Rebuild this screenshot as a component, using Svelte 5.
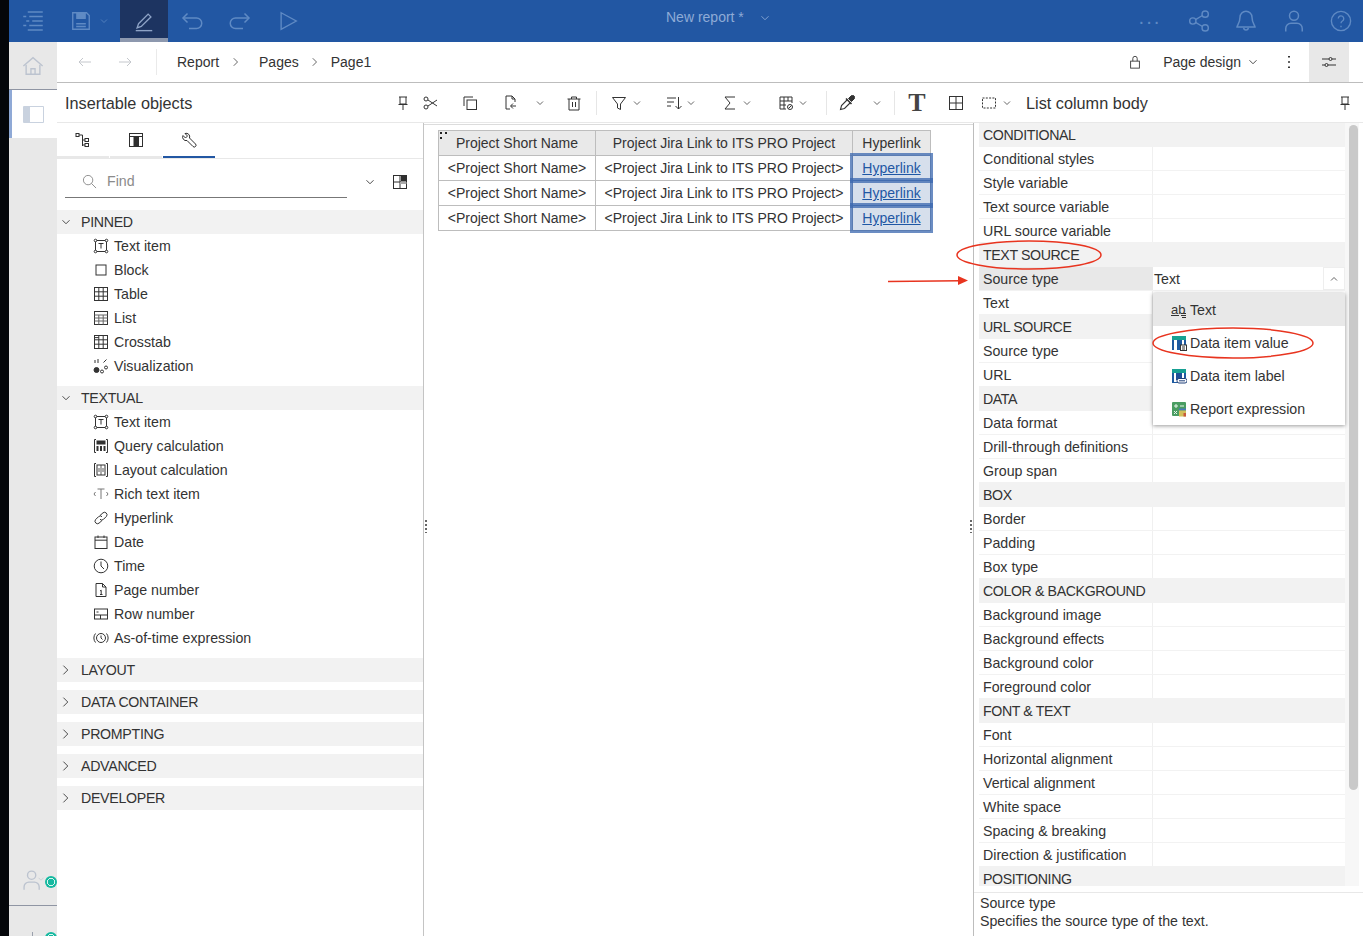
<script>
  const icons = {
    outline: '<path d="M4.500 2h10M1.500 5h2M5.500 5h9M3.500 8h2M7.500 8h7M1.500 11h2M5.500 11h9M4.500 14h10"/>',
    save: '<path d="M2 2h10l2 2v10H2z"/><path d="M5 2v4h6V2" fill="currentColor"/><path d="M4.500 10h7M4.500 12h7"/>',
    pen: '<path d="M4 10l7-7 2 2-7 7-3 1z"/><path d="M2 15h12"/>',
    undo: '<path d="M2 6h9a3 3 0 0 1 0 7H6"/><path d="M5 3L2 6l3 3"/>',
    redo: '<path d="M14 6H5a3 3 0 0 0 0 7h5"/><path d="M11 3l3 3-3 3"/>',
    play: '<path d="M3 2l11 6-11 6z"/>',
    share: '<circle cx="3.500" cy="8" r="2.300"/><circle cx="12.500" cy="3" r="2.300"/><circle cx="12.500" cy="13" r="2.300"/><path d="M5.500 7l5-3M5.500 9l5 3"/>',
    bell: '<path d="M8 1.500a4 4 0 0 0-4 4c0 4-2 5.500-2 6.500h12c0-1-2-2.500-2-6.500a4 4 0 0 0-4-4z"/><path d="M6.500 12.500a1.500 1.500 0 0 0 3 0"/>',
    user: '<circle cx="8" cy="4.500" r="3"/><path d="M2.500 15v-2a3.500 3.500 0 0 1 3.500-3.500h4a3.500 3.500 0 0 1 3.500 3.500v2"/>',
    help: '<circle cx="8" cy="8" r="7"/><path d="M6 6.200a2 2 0 1 1 3 1.800c-.7.400-1 .8-1 1.700M8 11.500v1"/>',
    home: '<path d="M1 8l7-6 7 6"/><path d="M3 7v7h10V7"/><path d="M6.500 14v-4h3v4"/>',
    back: '<path d="M14 8H2M6 4L2 8l4 4"/>',
    forward: '<path d="M2 8h12M10 4l4 4-4 4"/>',
    crumb: '<path d="M5 3l5 5-5 5"/>',
    lock: '<rect x="3" y="7" width="10" height="8"/><path d="M5.500 7V4a2.500 2.500 0 0 1 5 0v3"/>',
    kebab: '<path d="M8 2v1.500M8 7.200v1.500M8 12.500V14" stroke-width="2"/>',
    tune: '<path d="M1 5h7M11 5h4M1 11h3M7 11h8"/><circle cx="9.500" cy="5" r="1.500"/><circle cx="5.500" cy="11" r="1.500"/>',
    pin: '<path d="M5 2h6v7H5zM3.500 9.500h9M8 9.500V15" /><path d="M5 2H4m7 0h1"/>',
    scissors: '<circle cx="3" cy="4" r="2"/><circle cx="3" cy="12" r="2"/><path d="M5 5l9 6M5 11l9-6"/>',
    copy: '<path d="M2 11V2h9"/><rect x="5" y="5" width="9.500" height="9.500"/>',
    paste: '<path d="M9 1H3v13h4M9 1l3 3v3M9 1v3h3"/><path d="M13 11H8M10 8.500L7.500 11l2.500 2.500"/>',
    trash: '<path d="M1.500 4h13M5.500 4V2h5v2M3 4v11h10V4M6.500 7v5M9.500 7v5"/>',
    filter: '<path d="M1.500 2.500h13L9.500 9v5.500l-3-1.500V9z"/>',
    sort: '<path d="M1 3h9M1 7h7M1 11h4M12.500 2v12M9.500 11l3 3 3-3"/>',
    sum: '<path d="M13 2H3l5 6-5 6h10"/>',
    tcalc: '<path d="M8 14H2V2h12v6M2 6h12M2 10h6M6 2v12M10 2v4"/><circle cx="12" cy="12" r="2.500"/><path d="M10.500 13.500l3-3"/>',
    dropper: '<path d="M8.500 4.500L2.500 10.500 1.500 14.500l4-1 6-6" stroke-width="1.100"/><path d="M7 3.500l5.500 5.500" stroke-width="1.600"/><path d="M9.500 3.500l2.500-2.500a2 2 0 0 1 3 3l-2.500 2.500z" fill="currentColor"/>',
    grid: '<rect x="1.500" y="1.500" width="13" height="13"/><path d="M8 1.500v13M1.500 8h13"/>',
    dashed: '<rect x="1.500" y="3" width="13" height="10" stroke-dasharray="2 1.300"/>',
    chev: '<path d="M4 6l4 4 4-4"/>',
    chevup: '<path d="M4 10l4-4 4 4"/>',
    search: '<circle cx="6.500" cy="6.500" r="5"/><path d="M10 10l5 5"/>',
    layoutgrid: '<rect x="1.500" y="1.500" width="13" height="13"/><path d="M8 1.500v13M1.500 8h13"/><rect x="8" y="8" width="6.500" height="2" fill="#aaa" stroke="none"/><rect x="9.500" y="1.500" width="5" height="5" fill="currentColor"/>',
    tree: '<rect x="1" y="1.500" width="3" height="3"/><path d="M4 3h3.500v11M7.500 8H10M7.500 13H10"/><rect x="10" y="6.500" width="3.500" height="3"/><rect x="10" y="11.500" width="3.500" height="3"/>',
    columns: '<rect x="1.500" y="1.500" width="13" height="13"/><path d="M1.500 4.500h13"/><rect x="6" y="4.500" width="4.500" height="10" fill="currentColor"/>',
    wrench: '<path d="M2 3.500L4.500 6 6.500 4 4 1.500a3.500 3.500 0 0 1 4.500 4.500l6 6a1.500 1.500 0 0 1-2.500 2.500l-6-6A3.500 3.500 0 0 1 2 3.500z"/>',
    textitem: '<rect x="2.500" y="2.500" width="11" height="11"/><path d="M5.500 5.500h5M8 5.500v5"/><g fill="#fff"><circle cx="2.500" cy="2.500" r="1.300"/><circle cx="13.500" cy="2.500" r="1.300"/><circle cx="2.500" cy="13.500" r="1.300"/><circle cx="13.500" cy="13.500" r="1.300"/></g>',
    block: '<rect x="3" y="3" width="10" height="10"/>',
    table: '<rect x="1.500" y="1.500" width="13" height="13"/><path d="M1.500 5.800h13M1.500 10.200h13M5.800 1.500v13M10.200 1.500v13"/>',
    list: '<rect x="1.500" y="1.500" width="13" height="13"/><path d="M1.500 5h13M1.500 8h13M1.500 11h13M5.800 5v9.500M10.200 5v9.500" stroke="#666"/>',
    crosstab: '<rect x="1.500" y="1.500" width="13" height="13"/><path d="M1.500 5.800h13M1.500 10.200h13M5.800 1.500v13M10.200 1.500v13M1.500 3.600h4.300" />',
    viz: '<path d="M2 5V2M5 5V1M13.500 1.500l-3 3"/><circle cx="3.500" cy="12" r="2.500" fill="currentColor"/><circle cx="9" cy="13.500" r="1.500"/><circle cx="13" cy="9.500" r="1.500"/>',
    qcalc: '<path d="M3 1.500H1.500v13H3M13 1.500h1.500v13H13"/><rect x="4" y="3" width="8" height="3" fill="currentColor"/><path d="M4.500 8v5M8 8v5M11.500 8v5" stroke-width="2"/>',
    lcalc: '<path d="M3 1.500H1.500v13H3M13 1.500h1.500v13H13"/><rect x="4" y="3" width="8" height="10"/><path d="M8 3v10M6 6v4M10 6v4" stroke-width=".8"/>',
    rich: '<path d="M4.500 3h7M8 3v10M2.500 6L1 8l1.500 2M13.500 6L15 8l-1.500 2" stroke="#777"/>',
    link: '<path d="M7 5.500L10 2.800a2.500 2.500 0 0 1 3.500 3.500l-3 3a2.500 2.500 0 0 1-3.500 0"/><path d="M9 10.500L6 13.200a2.500 2.500 0 0 1-3.500-3.500l3-3a2.500 2.500 0 0 1 3.500 0"/>',
    date: '<rect x="2" y="3" width="12" height="11.500"/><path d="M2 6.200h12M5 1.500V4M11 1.500V4"/>',
    time: '<circle cx="8" cy="8" r="6.800"/><path d="M8 3.500V8l3 3"/>',
    pagenum: '<path d="M3 1.500h6.500L13 5v9.500H3zM9.500 1.500V5H13"/><path d="M7 9l1.200-.8V12.500M7 12.500h2.500"/>',
    rownum: '<rect x="1.500" y="3" width="13" height="10"/><path d="M1.500 9h13M7.500 9v4M3.500 6h2"/>',
    asof: '<circle cx="8" cy="8" r="4.500"/><path d="M8 5.500V8l1.500 1.500"/><path d="M2.500 3.500a7 7 0 0 0 0 9M13.500 3.500a7 7 0 0 1 0 9"/>',
    personcheck: '<circle cx="7" cy="4.500" r="3"/><path d="M1.500 15v-2a3.500 3.500 0 0 1 3.500-3.500h4a3.500 3.500 0 0 1 3.500 3.500v2"/>'
  };

  const tools = [
    { i: 'scissors', w: 16, ml: 8 }, { i: 'copy', w: 16, ml: 23 }, { i: 'paste', w: 16, ml: 25 },
    { i: 'chev', w: 12, ml: 15 }, { i: 'trash', w: 16, ml: 20 }, { sep: true, ml: 14 },
    { i: 'filter', w: 16, ml: 14 }, { i: 'chev', w: 12, ml: 4 },
    { i: 'sort', w: 16, ml: 23 }, { i: 'chev', w: 12, ml: 3 },
    { i: 'sum', w: 16, ml: 25 }, { i: 'chev', w: 12, ml: 3 },
    { i: 'tcalc', w: 16, ml: 25 }, { i: 'chev', w: 12, ml: 3 }, { sep: true, ml: 17 },
    { i: 'dropper', w: 16, ml: 12 }, { i: 'chev', w: 12, ml: 16 }, { sep: true, ml: 11 },
    { tee: true, w: 22, ml: 11 }, { i: 'grid', w: 16, ml: 20 }, { i: 'dashed', w: 16, ml: 17 }, { i: 'chev', w: 12, ml: 4 }
  ];

  const pinned = [
    ['textitem', 'Text item'], ['block', 'Block'], ['table', 'Table'],
    ['list', 'List'], ['crosstab', 'Crosstab'], ['viz', 'Visualization']
  ];
  const textual = [
    ['textitem', 'Text item'], ['qcalc', 'Query calculation'], ['lcalc', 'Layout calculation'],
    ['rich', 'Rich text item'], ['link', 'Hyperlink'], ['date', 'Date'], ['time', 'Time'],
    ['pagenum', 'Page number'], ['rownum', 'Row number'], ['asof', 'As-of-time expression']
  ];
  const closed = ['LAYOUT', 'DATA CONTAINER', 'PROMPTING', 'ADVANCED', 'DEVELOPER'];

  const props = [
    '#CONDITIONAL', 'Conditional styles', 'Style variable', 'Text source variable', 'URL source variable',
    '#TEXT SOURCE', '*Source type', 'Text',
    '#URL SOURCE', 'Source type', 'URL',
    '#DATA', 'Data format', 'Drill-through definitions', 'Group span',
    '#BOX', 'Border', 'Padding', 'Box type',
    '#COLOR & BACKGROUND', 'Background image', 'Background effects', 'Background color', 'Foreground color',
    '#FONT & TEXT', 'Font', 'Horizontal alignment', 'Vertical alignment', 'White space', 'Spacing & breaking', 'Direction & justification',
    '#POSITIONING'
  ];

  const rows = [0, 1, 2];
</script>

{#snippet icon(name, size = 16, cls = '')}
  <svg class="icon {cls}" width={size} height={size} viewBox="0 0 16 16" fill="none" stroke="currentColor" stroke-width="1">{@html icons[name]}</svg>
{/snippet}

<div class="page">
  <div class="strip"></div>
  <div class="shell">
    <header class="topbar">
      <div class="top-group">
        <span class="top-btn first">{@render icon('outline', 24)}</span>
        <span class="top-btn save">{@render icon('save', 22)}{@render icon('chev', 12)}</span>
        <span class="top-btn active">{@render icon('pen', 22)}</span>
        <span class="top-btn">{@render icon('undo', 24)}</span>
        <span class="top-btn">{@render icon('redo', 24)}</span>
        <span class="top-btn">{@render icon('play', 22)}</span>
      </div>
      <div class="doc-title">New report *{@render icon('chev', 14)}</div>
      <div class="top-right">
        <span class="dots">···</span>
        {@render icon('share', 22)}
        {@render icon('bell', 24)}
        {@render icon('user', 24)}
        {@render icon('help', 22)}
      </div>
    </header>

    <div class="body">
      <nav class="rail">
        <div class="rail-home">{@render icon('home', 22)}</div>
        <div class="rail-active"><span class="panel-glyph"><i></i></span></div>
        <div class="rail-fill"></div>
        <div class="rail-user">{@render icon('personcheck', 22)}<span class="check">{@render icon('chev', 10)}</span><span class="status"></span></div>
        <div class="rail-last"><span class="tick"></span><span class="status low"></span></div>
      </nav>

      <main class="main">
        <div class="crumbs">
          {@render icon('back', 16, 'nav-a')}
          {@render icon('forward', 16, 'nav-b')}
          <span class="crumb-sep"></span>
          <span>Report</span>{@render icon('crumb', 12, 'arrow-a')}
          <span>Pages</span>{@render icon('crumb', 12, 'arrow-b')}
          <span>Page1</span>
          <div class="crumb-right">
            {@render icon('lock', 14)}
            <span class="design">Page design</span>{@render icon('chev', 14, 'design-chev')}
            {@render icon('kebab', 16, 'kebab')}
            <span class="tune">{@render icon('tune', 16)}</span>
          </div>
        </div>

        <div class="toolbar">
          <div class="tb-left">
            <span class="panel-title">Insertable objects</span>
            {@render icon('pin', 16)}
          </div>
          {#each tools as t}
            {#if t.sep}
              <span class="tb-sep" style="margin-left:{t.ml}px"></span>
            {:else if t.tee}
              <span class="tee" style="margin-left:{t.ml}px;width:{t.w}px">T</span>
            {:else}
              <span class="tool" style="margin-left:{t.ml}px;width:{t.w}px">{@render icon(t.i, t.w)}</span>
            {/if}
          {/each}
          <span class="panel-title right-title">List column body</span>
          {@render icon('pin', 16, 'right-pin')}
        </div>

        <div class="columns">
          <aside class="insert">
            <div class="tabs">
              <span class="tab">{@render icon('tree', 16)}</span>
              <span class="tab">{@render icon('columns', 16)}</span>
              <span class="tab on">{@render icon('wrench', 16)}</span>
            </div>
            <div class="find">
              <div class="find-box">{@render icon('search', 15)}<span>Find</span></div>
              {@render icon('chev', 14, 'find-chev')}
              {@render icon('layoutgrid', 16, 'find-grid')}
            </div>

            <div class="sec">{@render icon('chev', 14)}<span>PINNED</span></div>
            {#each pinned as [ic, label]}
              <div class="item">{@render icon(ic, 16)}<span>{label}</span></div>
            {/each}
            <div class="sec next">{@render icon('chev', 14)}<span>TEXTUAL</span></div>
            {#each textual as [ic, label]}
              <div class="item">{@render icon(ic, 16)}<span>{label}</span></div>
            {/each}
            {#each closed as label}
              <div class="sec next">{@render icon('crumb', 14)}<span>{label}</span></div>
            {/each}
            <span class="grip"></span>
          </aside>

          <section class="canvas">
            <div class="sheet">
              <span class="handle"></span>
              <table>
                <thead>
                  <tr><th class="c1">Project Short Name</th><th class="c2">Project Jira Link to ITS PRO Project</th><th class="c3">Hyperlink</th></tr>
                </thead>
                <tbody>
                  {#each rows as r}
                    <tr>
                      <td>&lt;Project Short Name&gt;</td>
                      <td>&lt;Project Jira Link to ITS PRO Project&gt;</td>
                      <td class="picked"><a href="#top">Hyperlink</a></td>
                    </tr>
                  {/each}
                </tbody>
              </table>
            </div>
            <span class="grip right"></span>
          </section>

          <aside class="props">
            <div class="scroller">
              <div class="prop-list">
                {#each props as p}
                  {#if p[0] === '#'}
                    <div class="phead">{p.slice(1)}</div>
                  {:else if p[0] === '*'}
                    <div class="prow active">
                      <span class="pname">{p.slice(1)}</span>
                      <span class="pval">Text<span class="pbtn">{@render icon('chevup', 12)}</span></span>
                    </div>
                  {:else}
                    <div class="prow"><span class="pname">{p}</span><span class="pval"></span></div>
                  {/if}
                {/each}
              </div>
              <div class="track"><div class="thumb"></div></div>
            </div>
            <div class="help">Source type<br />Specifies the source type of the text.</div>

            <div class="dropdown">
              <div class="opt sel">
                <svg class="opt-ic" width="16" height="16" viewBox="0 0 16 16" fill="none" stroke="#333"><text x="0" y="12" font-size="13" fill="#333" stroke="none" font-family="Liberation Sans, sans-serif">ab</text><path d="M0 13.500h8M10 11.500h5M10 13.500h5M11 15.500h4"/></svg>
                Text
              </div>
              <div class="opt">
                <svg class="opt-ic" width="16" height="16" viewBox="0 0 16 16"><rect x="1" y="1" width="14" height="4" fill="#17a093"/><rect x="1" y="5" width="14" height="10" fill="#fff"/><rect x="1" y="5" width="2" height="10" fill="#1f5aa0"/><rect x="6" y="5" width="5" height="10" fill="#1f5aa0"/><rect x="13" y="5" width="2" height="5" fill="#1f5aa0"/><rect x="9.500" y="10" width="6" height="5.500" fill="#fff" stroke="#333"/><path d="M11 12h3M11 14h3" stroke="#333"/></svg>
                Data item value
              </div>
              <div class="opt">
                <svg class="opt-ic" width="16" height="16" viewBox="0 0 16 16"><rect x="1" y="1" width="14" height="4" fill="#17a093"/><rect x="1" y="5" width="14" height="10" fill="#fff"/><rect x="1" y="5" width="2" height="10" fill="#1f5aa0"/><rect x="5" y="5" width="6" height="7" fill="#1f4f98"/><rect x="13" y="5" width="2" height="5" fill="#1f5aa0"/><rect x="1" y="14" width="6" height="1" fill="#1f5aa0"/><rect x="6" y="10.500" width="10" height="4.500" rx="2" fill="#fff" stroke="#1f3f78"/><path d="M8 12.800h6" stroke="#1f3f78"/></svg>
                Data item label
              </div>
              <div class="opt">
                <svg class="opt-ic" width="16" height="16" viewBox="0 0 16 16"><rect x="1" y="1" width="14" height="14" rx="1" fill="#4a9d62"/><path d="M3 5h4M5 3v4M9 5h4M3 10l3 3M6 10l-3 3" stroke="#eaf5ec"/><rect x="8" y="7.500" width="7" height="2" fill="#4b79b8"/><rect x="8" y="9.500" width="7" height="6" fill="#d2c05c"/><rect x="12.500" y="12" width="2.500" height="3.500" fill="#c85a3c"/></svg>
                Report expression
              </div>
            </div>
          </aside>
        </div>
      </main>
    </div>
  </div>

  <svg class="marks" width="1363" height="936" viewBox="0 0 1363 936" fill="none" stroke="#e8341f" stroke-width="1.500">
    <ellipse cx="1029" cy="255" rx="72" ry="14" />
    <ellipse cx="1233" cy="343" rx="80" ry="15" />
    <path d="M888 281.500l72-.7" />
    <path d="M958 276l10 4.500-10 4.500z" fill="#e8341f" stroke="none" />
  </svg>
</div>

<style>
  :global(body) {
    margin: 0;
    background: #fff;
    overflow: hidden;
  }
  .page {
    position: relative;
    display: flex;
    width: 1363px;
    height: 936px;
    overflow: hidden;
    font-family: "Liberation Sans", Arial, sans-serif;
    font-size: 14px;
    color: #2f2f2f;
  }
  .icon { flex: none; display: block; }
  .strip { width: 9px; flex: none; background: #04060a; }
  .shell { flex: 1; display: flex; flex-direction: column; min-width: 0; }

  .topbar {
    height: 42px;
    flex: none;
    background: #2257a3;
    color: #5f8ac4;
    display: flex;
    align-items: center;
    position: relative;
  }
  .top-group { display: flex; height: 100%; align-items: center; }
  .top-btn {
    width: 48px;
    height: 100%;
    display: flex;
    align-items: center;
    justify-content: center;
    box-sizing: border-box;
  }
  .top-btn.first { width: 48px; }
  .top-btn.save { width: 63px; gap: 6px; justify-content: flex-start; padding-left: 13px; }
  .top-btn.active {
    background: #1d3461;
    border-bottom: 4px solid #8d98ae;
    color: #8ea3c6;
    padding-top: 4px;
  }
  .doc-title {
    position: absolute;
    left: 657px;
    top: 9px;
    display: flex;
    gap: 14px;
    align-items: center;
    color: #8eabd6;
    font-size: 14px;
    line-height: 17px;
  }
  .top-right {
    margin-left: auto;
    display: flex;
    align-items: center;
    gap: 24px;
    padding-right: 11px;
  }
  .dots { font-size: 20px; letter-spacing: 1px; line-height: 20px; margin-right: 3px; }

  .body { flex: 1; display: flex; min-height: 0; }
  .rail {
    width: 48px;
    flex: none;
    background: #e8e8e8;
    color: #bcc3cf;
    display: flex;
    flex-direction: column;
  }
  .rail-home {
    height: 47px;
    flex: none;
    border-bottom: 1px solid #8f95a3;
    display: flex;
    align-items: center;
    justify-content: center;
  }
  .rail-active {
    height: 48px;
    flex: none;
    background: #fff;
    border-left: 3px solid #8fa9d6;
    display: flex;
    align-items: center;
    justify-content: center;
    padding-right: 3px;
  }
  .panel-glyph {
    width: 21px;
    height: 17px;
    background: #c9d2df;
    border-radius: 1px;
    display: flex;
    justify-content: flex-end;
    padding: 1px;
    box-sizing: border-box;
  }
  .panel-glyph i { width: 13px; background: #fff; }
  .rail-fill { flex: 1; }
  .rail-user {
    height: 46px;
    flex: none;
    position: relative;
    display: flex;
    padding: 9px 0 0 13px;
    box-sizing: border-box;
    border-bottom: 1px solid #8f95a3;
  }
  .check { position: absolute; left: 27px; top: 14px; }
  .status {
    position: absolute;
    left: 36px;
    top: 16px;
    width: 12px;
    height: 12px;
    border-radius: 50%;
    background: radial-gradient(circle, #16b9a0 0 3px, #d8f4ee 3px 4px, #16b9a0 4px);
  }
  .rail-last { height: 30px; flex: none; position: relative; }
  .tick { position: absolute; left: 23px; top: 26px; width: 1px; height: 4px; background: #9aa0ac; }
  .status.low { top: 26px; }

  .main { flex: 1; min-width: 0; display: flex; flex-direction: column; }

  .crumbs {
    height: 40px;
    flex: none;
    display: flex;
    align-items: center;
    border-bottom: 1px solid #bdbdbd;
    color: #333;
  }
  :global(.nav-a) { margin-left: 20px; color: #c4c7cc; }
  :global(.nav-b) { margin-left: 24px; color: #c4c7cc; }
  .crumb-sep { width: 1px; height: 26px; background: #eaeaea; margin: 0 20px 0 23px; }
  :global(.arrow-a) { margin: 0 17px 0 11px; color: #333; }
  :global(.arrow-b) { margin: 0 10px 0 10px; color: #333; }
  .crumb-right { margin-left: auto; display: flex; align-items: center; height: 100%; }
  .design { margin-left: 21px; }
  :global(.design-chev) { margin-left: 5px; }
  :global(.kebab) { margin-left: 21px; }
  .tune {
    margin-left: 12px;
    margin-right: 14px;
    width: 40px;
    height: 100%;
    background: #e8e8e8;
    display: flex;
    align-items: center;
    justify-content: center;
  }

  .toolbar {
    height: 40px;
    flex: none;
    display: flex;
    align-items: center;
    border-bottom: 1px solid #e8e8e8;
    box-sizing: border-box;
    color: #333;
  }
  .tb-left {
    width: 358px;
    flex: none;
    box-sizing: border-box;
    padding: 0 4px 0 8px;
    display: flex;
    align-items: center;
    justify-content: space-between;
  }
  .panel-title { font-size: 16.25px; padding-top: 2px; }
  .tool { display: flex; justify-content: center; flex: none; }
  .tb-sep { width: 1px; height: 24px; background: #e6e6e6; flex: none; }
  .tee {
    font-family: "Liberation Serif", serif;
    font-weight: 700;
    font-size: 26px;
    line-height: 24px;
    text-align: center;
    flex: none;
    color: #444;
  }
  .right-title { margin-left: 13px; }
  :global(.right-pin) { margin-left: auto; margin-right: 10px; }

  .columns { flex: 1; display: flex; min-height: 0; }

  .insert {
    width: 367px;
    flex: none;
    box-sizing: border-box;
    border-right: 1px solid #c4c4c4;
    position: relative;
  }
  .tabs { height: 36px; display: flex; border-bottom: 1px solid #e8e8e8; box-sizing: border-box; }
  .tab {
    width: 52px;
    display: flex;
    justify-content: center;
    padding-top: 9px;
    box-sizing: border-box;
    border-bottom: 2px solid #e8e8e8;
    margin-right: 1px;
  }
  .tab.on { border-bottom-color: #2257a3; }
  .find { height: 46px; margin-bottom: 5px; display: flex; align-items: center; position: relative; }
  .find-box {
    margin-left: 8px;
    width: 282px;
    height: 39px;
    align-self: flex-start;
    box-sizing: border-box;
    border-bottom: 1px solid #777;
    display: flex;
    align-items: center;
    gap: 10px;
    padding: 6px 0 0 17px;
    color: #8b8b8b;
    font-size: 14.2px;
  }
  :global(.find-chev) { margin-left: 16px; }
  :global(.find-grid) { margin-left: 15px; }
  .sec {
    height: 24px;
    background: #f2f2f2;
    display: flex;
    align-items: center;
    gap: 8px;
    padding-left: 2px;
    color: #333;
    letter-spacing: -.3px;
    font-size: 14.2px;
  }
  .sec.next { margin-top: 8px; }
  .item { height: 24px; display: flex; align-items: center; gap: 5px; padding-left: 36px; color: #333; font-size: 14.2px; }
  .grip {
    position: absolute;
    right: -4px;
    top: 396px;
    width: 2px;
    height: 14px;
    background: radial-gradient(circle, #666 1px, transparent 1px) 0 0 / 2px 4px;
  }

  .canvas { width: 549px; flex: none; position: relative; box-sizing: border-box; border-top: 1px solid #dcdcdc; margin-top: 1px; }
  .grip.right { right: 1px; top: 394px; }
  .sheet { position: absolute; left: 14px; top: 5px; }
  .handle {
    position: absolute;
    left: 2px;
    top: 2px;
    width: 7px;
    height: 7px;
    background:
      linear-gradient(#222, #222) 0 0 / 2px 2px no-repeat,
      linear-gradient(#222, #222) 100% 0 / 2px 2px no-repeat,
      linear-gradient(#222, #222) 0 100% / 2px 2px no-repeat;
  }
  table { border-collapse: collapse; font-size: 14px; color: #333; }
  th, td { border: 1px solid #bdbdbd; height: 24px; padding: 0; text-align: center; font-weight: 400; white-space: nowrap; }
  th { background: #e9e9e9; }
  .c1 { width: 156px; }
  .c2 { width: 256px; }
  .c3 { width: 77px; }
  .picked { background: #d6dfec; position: relative; }
  .picked::after {
    content: "";
    position: absolute;
    inset: -3px -3px -3px -3px;
    border: 3px solid rgba(58, 103, 175, .75);
    pointer-events: none;
    z-index: 1;
  }
  .picked a { color: #1f57a4; }

  .props {
    flex: 1;
    min-width: 0;
    position: relative;
    border-left: 1px solid #bdbdbd;
    display: flex;
    flex-direction: column;
  }
  .scroller { height: 763px; flex: none; display: flex; overflow: hidden; padding-left: 5px; }
  .prop-list { width: 366px; flex: none; }
  .phead { height: 24px; line-height: 24px; background: #f2f2f2; padding-left: 4px; color: #333; font-size: 14.2px; letter-spacing: -.4px; }
  .prow { height: 24px; display: flex; box-sizing: border-box; border-bottom: 1px solid #f2f2f2; color: #333; line-height: 25px; font-size: 14.2px; }
  .pname { width: 174px; flex: none; padding-left: 4px; box-sizing: border-box; border-right: 1px solid #f0f0f0; white-space: nowrap; }
  .pval { flex: 1; position: relative; padding-left: 1px; }
  .prow.active .pname { background: #e8e8e8; border-right: 0; }
  .pbtn {
    position: absolute;
    right: 0;
    top: 0;
    width: 22px;
    height: 23px;
    box-sizing: border-box;
    border: 1px solid #eee;
    display: flex;
    align-items: center;
    justify-content: center;
  }
  .track { width: 14px; background: #f7f7f7; padding: 2px 4px 0 4px; box-sizing: border-box; flex: none; }
  .thumb { width: 9px; height: 665px; background: #c9c9c9; border-radius: 5px; }
  .help {
    margin-top: 6px;
    border-top: 1px solid #e8e8e8;
    padding: 1px 6px 0;
    line-height: 18px;
    color: #333;
    font-size: 14.2px;
  }
  .dropdown {
    position: absolute;
    left: 179px;
    top: 170px;
    width: 192px;
    background: #fff;
    box-shadow: 0 1px 4px rgba(0, 0, 0, .4);
    color: #333;
    z-index: 2;
  }
  .opt { height: 33px; display: flex; align-items: center; gap: 3px; padding-left: 18px; font-size: 14.2px; }
  .opt.sel { background: #e8e8e8; }
  .opt-ic { flex: none; }

  .marks { position: absolute; left: 0; top: 0; pointer-events: none; z-index: 3; }
</style>
